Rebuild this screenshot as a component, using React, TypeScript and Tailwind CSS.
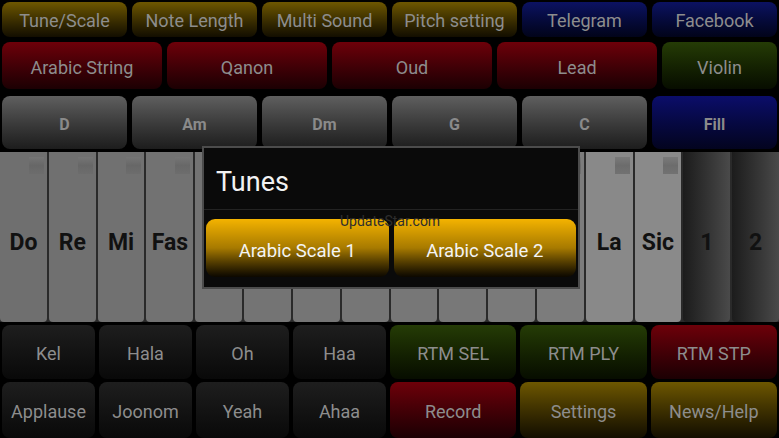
import React from "react";

type Tone = "gold" | "red" | "blue" | "green" | "gray" | "navy" | "black";

const toneClass: Record<Tone, string> = {
  gold: "bg-linear-to-b from-[#6e5700] to-[#130e00]",
  red: "bg-linear-to-b from-[#6e0009] to-[#1c0003]",
  blue: "bg-linear-to-b from-[#0c1262] to-[#02041a]",
  green: "bg-linear-to-b from-[#253c06] to-[#070d00]",
  gray: "bg-linear-to-b from-[#5f5f5f] to-[#1d1d1d]",
  navy: "bg-linear-to-b from-[#0b0d6a] to-[#03041f]",
  black: "bg-linear-to-b from-[#1e1e1e] to-[#090909]",
};

interface PadProps {
  label: string;
  tone: Tone;
  bold?: boolean;
}

const Pad: React.FC<PadProps> = ({ label, tone, bold = false }) => (
  <div
    className={`flex items-center justify-center rounded-[8px] pt-[3px] ${toneClass[tone]} ${
      bold ? "pt-[5px] text-[16px] font-bold text-[#8a8a8a]" : "text-[18px] text-[#8d8d8d]"
    }`}
  >
    {label}
  </div>
);

interface KeyDef {
  label: string;
  bg: string;
  marker?: boolean;
}

const keys: KeyDef[] = [
  { label: "Do", bg: "bg-[#6f6f6f]", marker: true },
  { label: "Re", bg: "bg-[#707070]", marker: true },
  { label: "Mi", bg: "bg-[#717171]", marker: true },
  { label: "Fas", bg: "bg-[#727272]", marker: true },
  { label: "", bg: "bg-[#737373]", marker: true },
  { label: "", bg: "bg-[#747474]", marker: true },
  { label: "", bg: "bg-[#757575]", marker: true },
  { label: "", bg: "bg-[#767676]", marker: true },
  { label: "", bg: "bg-[#777777]", marker: true },
  { label: "", bg: "bg-[#787878]", marker: true },
  { label: "", bg: "bg-[#7a7a7a]", marker: true },
  { label: "", bg: "bg-[#7c7c7c]", marker: true },
  { label: "La", bg: "bg-[#898989]", marker: true },
  { label: "Sic", bg: "bg-[#8a8a8a]", marker: true },
  { label: "1", bg: "bg-linear-to-r from-[#1c1c1c] to-[#4a4a4a]" },
  { label: "2", bg: "bg-linear-to-r from-[#1c1c1c] to-[#4a4a4a]" },
];

const PianoKey: React.FC<{ k: KeyDef }> = ({ k }) => (
  <div className={`relative flex items-center justify-center rounded-b-[4px] ${k.bg}`}>
    {k.marker && (
      <div className="absolute right-[3px] top-[5px] h-[17px] w-[15px] bg-linear-to-b from-[#767676] via-[#656565] to-[#6c6c6c] opacity-80" />
    )}
    <span className="mt-[12px] text-[23px] font-bold text-[#111111]">{k.label}</span>
  </div>
);

const App: React.FC = () => {
  return (
    <div
      className="flex h-[438px] w-[779px] flex-col overflow-hidden bg-black"
      style={{ fontFamily: "Roboto, 'Liberation Sans', sans-serif" }}
    >
      {/* top menu */}
      <div className="mt-[2px] grid h-[35px] grid-cols-6 gap-x-[5px] px-[2px]">
        <Pad label="Tune/Scale" tone="gold" />
        <Pad label="Note Length" tone="gold" />
        <Pad label="Multi Sound" tone="gold" />
        <Pad label="Pitch setting" tone="gold" />
        <Pad label="Telegram" tone="blue" />
        <Pad label="Facebook" tone="blue" />
      </div>

      {/* instruments */}
      <div className="mt-[5px] grid h-[48px] grid-cols-[160px_160px_160px_160px_1fr] gap-x-[5px] px-[2px]">
        <Pad label="Arabic String" tone="red" />
        <Pad label="Qanon" tone="red" />
        <Pad label="Oud" tone="red" />
        <Pad label="Lead" tone="red" />
        <Pad label="Violin" tone="green" />
      </div>

      {/* chords */}
      <div className="mt-[7px] grid h-[53px] grid-cols-6 gap-x-[5px] px-[2px]">
        <Pad label="D" tone="gray" bold />
        <Pad label="Am" tone="gray" bold />
        <Pad label="Dm" tone="gray" bold />
        <Pad label="G" tone="gray" bold />
        <Pad label="C" tone="gray" bold />
        <Pad label="Fill" tone="navy" bold />
      </div>

      {/* keyboard + dialog */}
      <div className="relative mt-[3px] h-[172px]">
        <div className="grid h-full grid-cols-16 gap-x-[2px] bg-[#2a2a2a]">
          {keys.map((k, i) => (
            <PianoKey key={i} k={k} />
          ))}
        </div>

        <div className="absolute left-[202px] top-[-6px] flex h-[143px] w-[378px] flex-col border-2 border-[#4c4c4c] bg-[#0a0a0a]">
          <div className="flex h-[62px] items-center border-b border-[#232323] pl-[12px] pt-[8px] text-[27px] text-[#f2f2f2]">
            Tunes
          </div>
          <div className="mt-[9px] grid h-[58px] grid-cols-2 gap-x-[5px] px-[2px]">
            <div className="flex items-center justify-center rounded-[9px] bg-linear-to-b from-[#f4b300] via-[#a77a00] to-[#0c0800] pt-[7px] text-[18.5px] text-[#f4f4f4]">
              Arabic Scale 1
            </div>
            <div className="flex items-center justify-center rounded-[9px] bg-linear-to-b from-[#f4b300] via-[#a77a00] to-[#0c0800] pt-[7px] text-[18.5px] text-[#f4f4f4]">
              Arabic Scale 2
            </div>
          </div>
          <span className="absolute left-[136px] top-[66px] text-[14px] leading-none text-[#2e2e2e]">
            UpdateStar.com
          </span>
        </div>
      </div>

      {/* voice + rhythm */}
      <div className="mt-[3px] grid h-[54px] grid-cols-[93px_93px_93px_93px_1fr_1fr_1fr] gap-x-[4px] px-[2px]">
        <Pad label="Kel" tone="black" />
        <Pad label="Hala" tone="black" />
        <Pad label="Oh" tone="black" />
        <Pad label="Haa" tone="black" />
        <Pad label="RTM SEL" tone="green" />
        <Pad label="RTM PLY" tone="green" />
        <Pad label="RTM STP" tone="red" />
      </div>

      <div className="mt-[3px] grid h-[56px] shrink-0 grid-cols-[93px_93px_93px_93px_1fr_1fr_1fr] gap-x-[4px] px-[2px]">
        <Pad label="Applause" tone="black" />
        <Pad label="Joonom" tone="black" />
        <Pad label="Yeah" tone="black" />
        <Pad label="Ahaa" tone="black" />
        <Pad label="Record" tone="red" />
        <Pad label="Settings" tone="gold" />
        <Pad label="News/Help" tone="gold" />
      </div>
    </div>
  );
};

export default App;
